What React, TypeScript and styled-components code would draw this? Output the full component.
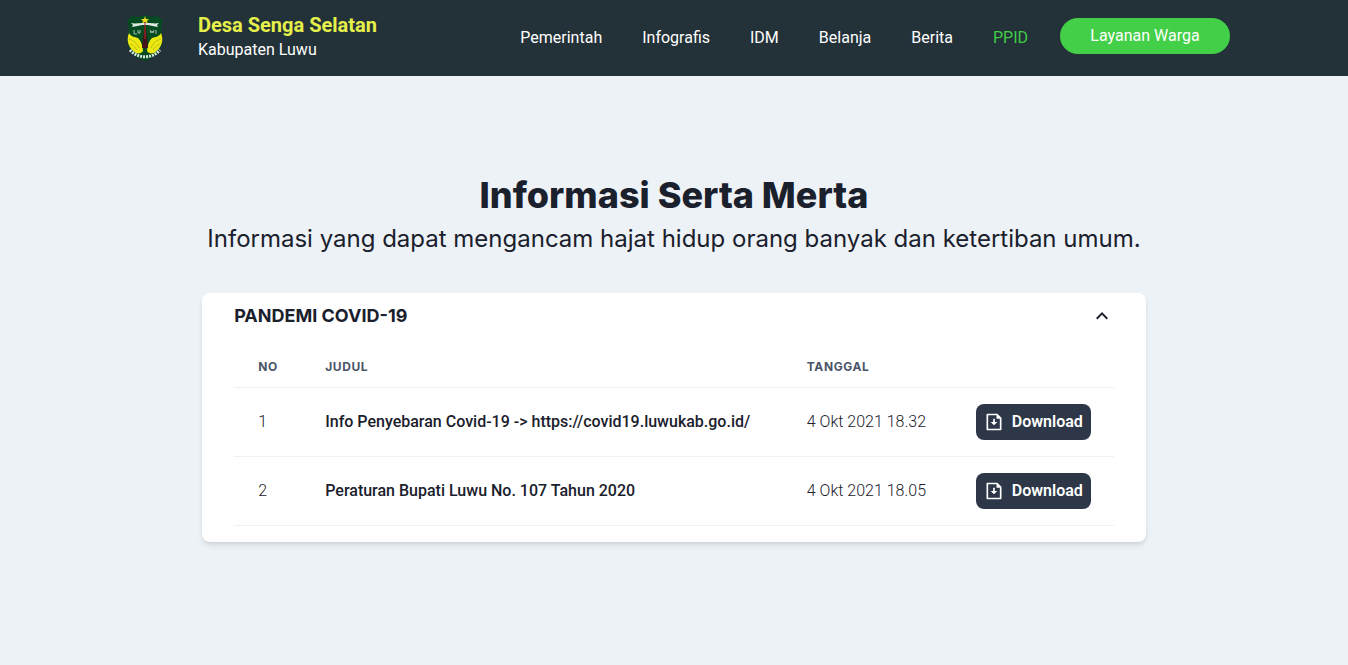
import React, { useState } from "react";
import styled, { createGlobalStyle } from "styled-components";
import { RiFileDownloadLine } from "react-icons/ri";

const GlobalStyle = createGlobalStyle`
  *, *::before, *::after { box-sizing: border-box; }
  body {
    margin: 0;
    background: #edf2f7;
    color: #1a202c;
    font-family: Roboto, "Liberation Sans", sans-serif;
    font-size: 16px;
    line-height: 24px;
  }
  h1, h2, p { margin: 0; }
  button { font: inherit; color: inherit; border: 0; cursor: pointer; }
  a { color: inherit; text-decoration: none; }
`;

const Header = styled.header`
  display: flex;
  justify-content: center;
  min-height: 76px;
  padding: 0 24px;
  background: #233138;
  color: #fff;
`;

const HeaderInner = styled.div`
  display: flex;
  align-items: center;
  justify-content: space-between;
  width: 100%;
  max-width: 1112px;
`;

const Brand = styled.a`
  display: flex;
  align-items: center;
  gap: 34px;
  padding-left: 8px;
`;

const BrandText = styled.span`
  display: flex;
  flex-direction: column;
`;

const VillageName = styled.span`
  color: #e6f04b;
  font-size: 20px;
  font-weight: 700;
  line-height: 24px;
`;

const Regency = styled.span`
  line-height: 26px;
`;

const Nav = styled.nav`
  display: flex;
  align-items: center;
  gap: 40px;
`;

const NavLink = styled.a<{ $active?: boolean }>`
  color: ${(p) => (p.$active ? "#41cd47" : "#fff")};
`;

const Actions = styled.div`
  display: flex;
  align-items: center;
  gap: 32px;
`;

const ServiceButton = styled.button`
  min-width: 170px;
  height: 36px;
  margin-bottom: 4px;
  padding: 0 24px;
  border-radius: 18px;
  background: #43cf47;
  color: #fff;
`;

const Main = styled.main`
  display: flex;
  flex-direction: column;
  width: 70%;
  margin: 0 auto;
  padding: 98px 0 64px;
`;

const Title = styled.h1`
  font-family: Inter, sans-serif;
  font-size: 36px;
  font-weight: 800;
  line-height: 43px;
  text-align: center;
`;

const Subtitle = styled.p`
  margin-top: 4px;
  font-family: Inter, sans-serif;
  font-size: 24px;
  line-height: 36px;
  text-align: center;
`;

const Card = styled.section`
  margin-top: 36px;
  padding: 0 32px;
  border-radius: 8px;
  background: #fff;
  box-shadow: 0 4px 6px -1px rgba(0, 0, 0, 0.1), 0 2px 4px -1px rgba(0, 0, 0, 0.06);
`;

const PanelToggle = styled.button`
  display: flex;
  align-items: center;
  justify-content: space-between;
  width: 100%;
  padding: 8px 0;
  background: transparent;
  text-align: left;
`;

const PanelTitle = styled.span`
  font-family: Inter, sans-serif;
  font-size: 18px;
  font-weight: 700;
  line-height: 30px;
`;

const Chevron = styled.svg<{ $open: boolean }>`
  width: 24px;
  height: 24px;
  transform: ${(p) => (p.$open ? "none" : "rotate(180deg)")};
`;

const Panel = styled.div`
  padding: 8px 0 16px;
`;

const Table = styled.table`
  width: 100%;
  table-layout: fixed;
  border-collapse: collapse;
  font-variant-numeric: lining-nums tabular-nums;
`;

const HeadCell = styled.th<{ $width?: number }>`
  width: ${(p) => (p.$width ? `${p.$width}px` : "auto")};
  padding: 12px 24px;
  border-bottom: 1px solid #edf2f7;
  color: #4a5568;
  font-family: Inter, sans-serif;
  font-size: 12px;
  font-weight: 700;
  line-height: 16px;
  letter-spacing: 0.05em;
  text-align: left;
`;

const Cell = styled.td<{ $strong?: boolean }>`
  padding: 16px 24px;
  border-bottom: 1px solid #edf2f7;
  font-weight: ${(p) => (p.$strong ? 500 : 300)};
  white-space: nowrap;
`;

const DownloadButton = styled.button`
  display: flex;
  align-items: center;
  gap: 8px;
  height: 36px;
  padding: 0 8px;
  border-radius: 8px;
  background: #2d3748;
  color: #fff;
  font-weight: 600;

  svg { width: 20px; height: 20px; }
`;

const Crest = () => (
  <svg width="38" height="46" viewBox="0 0 38 46" role="img" aria-label="Luwu">
    <path d="M19 0c4 2 9 2 13 1 1 2 3 3 5 4-3 6-1 15-1 22 0 9-7 16-17 19C9 43 2 36 2 27 2 20 4 11 1 5c2-1 4-2 5-4 4 1 9 1 13-1Z" fill="#064a22" />
    <path d="m19 1 1 3h3l-2 2 1 3-3-2-3 2 1-3-2-2h3Z" fill="#e8d91b" />
    <path d="M5 8c4 1 7 0 11 0h6c4 0 7 1 11 0l-2 2 1 2c-4-1-7-1-10-2h-6c-3 1-6 1-10 2l1-2Z" fill="#dfe9e1" />
    <path d="M3 18c-3 7-1 15 7 20 3 1 6 0 7-2 0-5-2-10-5-13-3-1-7-1-9-5Z" fill="#ece812" />
    <path d="M35 18c3 7 1 15-7 20-3 1-6 0-7-2 0-5 2-10 5-13 3-1 7-1 9-5Z" fill="#ece812" />
    <path d="M3 24c4 1 8 4 10 9M4 29c3 1 5 3 7 6M35 24c-4 1-8 4-10 9M34 29c-3 1-5 3-7 6" fill="none" stroke="#c2bf14" strokeWidth="1" />
    <path d="m19 9 2 14 1 10h-6l1-10Z" fill="#42141a" />
    <path d="M19 7v17" stroke="#b52a2d" strokeWidth="1" />
    <path d="M8 15v4h3M12 15v3h2v-3M24 15l1 3 1-2 1 2 1-3M30 15v4" fill="none" stroke="#9fbba8" strokeWidth="1" />
    <path d="M4 35c8 9 22 9 30 0" fill="none" stroke="#dbe6de" strokeWidth="3" strokeDasharray="2 1" />
  </svg>
);

const links = ["Pemerintah", "Infografis", "IDM", "Belanja", "Berita", "PPID"];

const documents = [
  { title: "Info Penyebaran Covid-19 -> https://covid19.luwukab.go.id/", date: "4 Okt 2021 18.32" },
  { title: "Peraturan Bupati Luwu No. 107 Tahun 2020", date: "4 Okt 2021 18.05" },
];

export default function App() {
  const [open, setOpen] = useState(true);
  return (
    <>
      <GlobalStyle />
      <Header>
        <HeaderInner>
          <Brand href="#">
            <Crest />
            <BrandText>
              <VillageName>Desa Senga Selatan</VillageName>
              <Regency>Kabupaten Luwu</Regency>
            </BrandText>
          </Brand>
          <Actions>
            <Nav>
              {links.map((label) => (
                <NavLink key={label} href="#" $active={label === "PPID"}>{label}</NavLink>
              ))}
            </Nav>
            <ServiceButton type="button">Layanan Warga</ServiceButton>
          </Actions>
        </HeaderInner>
      </Header>
      <Main>
        <Title>Informasi Serta Merta</Title>
        <Subtitle>Informasi yang dapat mengancam hajat hidup orang banyak dan ketertiban umum.</Subtitle>
        <Card>
          <PanelToggle type="button" aria-expanded={open} aria-controls="documents" onClick={() => setOpen(!open)}>
            <PanelTitle>PANDEMI COVID-19</PanelTitle>
            <Chevron $open={open} viewBox="0 0 24 24" aria-hidden="true">
              <path fill="currentColor" d="M12 8l-6 6 1.41 1.41L12 10.83l4.59 4.58L18 14z" />
            </Chevron>
          </PanelToggle>
          <Panel id="documents" hidden={!open}>
            <Table>
              <thead>
                <tr>
                  <HeadCell $width={67}>NO</HeadCell>
                  <HeadCell>JUDUL</HeadCell>
                  <HeadCell $width={169}>TANGGAL</HeadCell>
                  <HeadCell $width={162} />
                </tr>
              </thead>
              <tbody>
                {documents.map((doc, i) => (
                  <tr key={doc.title}>
                    <Cell>{i + 1}</Cell>
                    <Cell $strong>{doc.title}</Cell>
                    <Cell>{doc.date}</Cell>
                    <Cell>
                      <DownloadButton type="button">
                        <RiFileDownloadLine aria-hidden="true" />
                        Download
                      </DownloadButton>
                    </Cell>
                  </tr>
                ))}
              </tbody>
            </Table>
          </Panel>
        </Card>
      </Main>
    </>
  );
}
